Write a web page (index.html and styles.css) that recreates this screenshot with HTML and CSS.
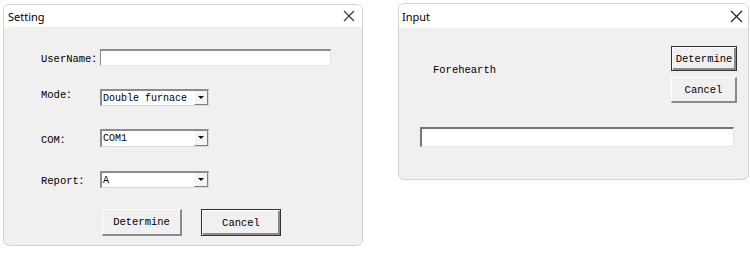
FILE: index.html
```html
<!DOCTYPE html>
<html lang="en">
<head>
    <meta charset="UTF-8">
    <meta name="viewport" content="width=device-width, initial-scale=1.0">
    <link rel="stylesheet" href="styles.css">
    <title>Dialogs</title>
</head>
<body>
    <div class="ventana setting">
        <div class="titulo">
            <span>Setting</span>
            <svg class="cerrar" width="12" height="12" viewBox="0 0 12 12"><path d="M1 1L11 11M11 1L1 11" stroke="#333" stroke-width="1.1" fill="none"/></svg>
        </div>
        <div class="cuerpo">
            <div class="fila f1">
                <label>UserName：</label>
                <div class="caja ancha"></div>
            </div>
            <div class="fila f2">
                <label class="arriba">Mode：</label>
                <div class="combo"><span>Double furnace</span><i class="flecha"></i></div>
            </div>
            <div class="fila f3">
                <label>COM：</label>
                <div class="combo"><span>COM1</span><i class="flecha"></i></div>
            </div>
            <div class="fila f4">
                <label>Report：</label>
                <div class="combo"><span>A</span><i class="flecha"></i></div>
            </div>
            <div class="botones">
                <button class="boton">Determine</button>
                <button class="boton defecto">Cancel</button>
            </div>
        </div>
    </div>

    <div class="ventana input">
        <div class="titulo">
            <span>Input</span>
            <svg class="cerrar" width="13" height="13" viewBox="0 0 13 13"><path d="M1 1L12 12M12 1L1 12" stroke="#222" stroke-width="1.2" fill="none"/></svg>
        </div>
        <div class="cuerpo">
            <div class="arriba-input">
                <p class="texto">Forehearth</p>
                <div class="columna">
                    <button class="boton defecto peq">Determine</button>
                    <button class="boton peq">Cancel</button>
                </div>
            </div>
            <div class="caja larga"></div>
        </div>
    </div>
</body>
</html>
```

FILE: styles.css
```css
* {
    margin: 0;
    padding: 0;
    box-sizing: border-box;
}
body {
    display: flex;
    align-items: flex-start;
    background-color: #fff;
    font-family: 'Liberation Mono', 'Noto Sans CJK SC', monospace;
    font-size: 10px;
    color: #111;
}
.ventana {
    display: flex;
    flex-direction: column;
    border: 1px solid #d4d4d4;
    border-radius: 6px;
    background-color: #f0f0f0;
    overflow: hidden;
}
.setting {
    margin: 4px 0 0 3px;
    width: 360px;
    height: 242px;
}
.input {
    margin: 3px 0 0 35px;
    width: 351px;
    height: 177px;
}
.titulo {
    display: flex;
    align-items: center;
    justify-content: space-between;
    background-color: #fff;
    height: 22px;
    padding: 0 7px 0 4px;
    font-family: 'Noto Sans', 'Liberation Sans', sans-serif;
    font-size: 11px;
    color: #000;
}
.input .titulo {
    height: 24px;
    padding: 0 5px 0 3px;
}

/* ventana Setting */
.setting .cuerpo {
    padding-left: 37px;
}
.fila {
    display: flex;
    align-items: center;
}
.fila label {
    width: 59px;
    font-size: 10.5px;
    color: #000;
    white-space: nowrap;
}
.fila .arriba {
    position: relative;
    top: -4px;
}
.f1 { margin-top: 22px; }
.f2 { margin-top: 23px; }
.f3 { margin-top: 23px; }
.f4 { margin-top: 24px; }
.caja {
    background-color: #fff;
    border-top: 2px solid #8a8a8a;
    border-left: 1px solid #8a8a8a;
    border-right: 1px solid #e6e6e6;
    border-bottom: 1px solid #e6e6e6;
}
.ancha {
    width: 231px;
    height: 17px;
}
.combo {
    display: flex;
    align-items: center;
    justify-content: space-between;
    width: 109px;
    height: 17px;
    background-color: #fff;
    border-top: 2px solid #8c8c8c;
    border-left: 2px solid #8c8c8c;
    border-right: 1px solid #d8d8d8;
    border-bottom: 1px solid #d8d8d8;
    font-size: 10px;
    color: #000;
    white-space: nowrap;
}
.f3 .combo {
    height: 18px;
}
.combo span {
    padding-left: 1px;
}
.flecha {
    position: relative;
    flex: none;
    width: 14px;
    height: 100%;
    background-color: #f4f4f4;
    border-left: 1px solid #fff;
    border-right: 1px solid #808080;
    border-bottom: 1px solid #808080;
}
.flecha::after {
    content: "";
    position: absolute;
    left: 3px;
    top: 5px;
    border-left: 3px solid transparent;
    border-right: 3px solid transparent;
    border-top: 3px solid #111;
}
.botones {
    display: flex;
    gap: 19px;
    margin-top: 21px;
    padding-left: 61px;
}
.boton {
    width: 80px;
    height: 27px;
    background-color: #f0f0f0;
    border-top: 1px solid #fff;
    border-left: 1px solid #fff;
    border-right: 2px solid #8a8a8a;
    border-bottom: 2px solid #8a8a8a;
    font-family: 'Liberation Mono', monospace;
    font-size: 10.5px;
    color: #000;
}
.defecto {
    border: 1px solid #333;
    box-shadow: inset 1px 1px 0 #fff, inset -2px -2px 0 #8a8a8a;
}

/* ventana Input */
.arriba-input {
    display: flex;
    justify-content: space-between;
    padding: 18px 11px 0 34px;
}
.texto {
    margin-top: 18px;
    font-size: 10.5px;
    color: #000;
}
.columna {
    display: flex;
    flex-direction: column;
    gap: 6px;
}
.peq {
    width: 66px;
    height: 25px;
}
.peq + .peq {
    height: 26px;
}
.larga {
    margin: 24px 0 0 21px;
    width: 314px;
    height: 20px;
    border-top: 2px solid #777;
    border-left: 2px solid #777;
}
```
